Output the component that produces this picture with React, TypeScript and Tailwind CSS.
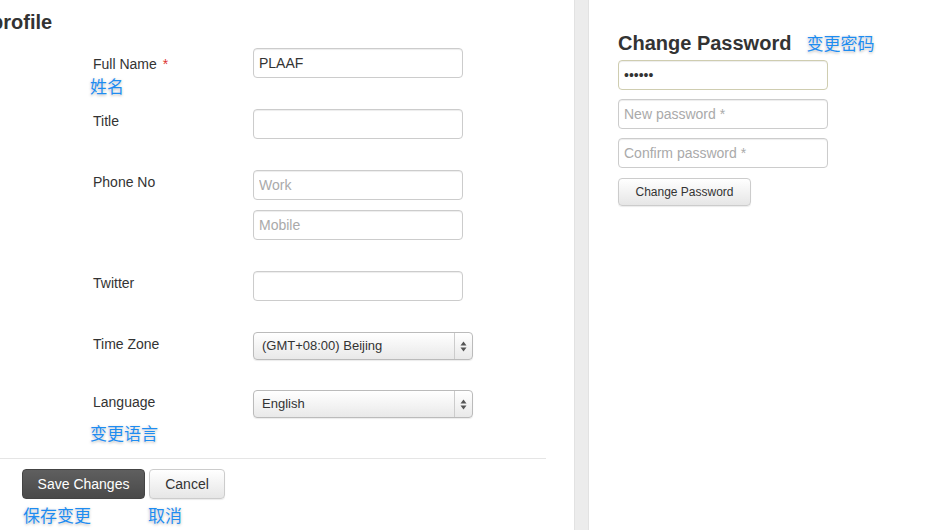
import React from "react";

const note =
  "text-[17px] leading-none whitespace-nowrap text-[#1e8cf0] [font-family:'Noto_Sans_CJK_SC',sans-serif] [text-shadow:0_0_2px_#fff,0_1px_3px_rgba(0,0,0,0.35)]";

const inputCls =
  "block w-[210px] h-[30px] px-[5px] rounded-[4px] border border-[#ccc] bg-white text-[14px] text-[#333] shadow-[inset_0_1px_1px_rgba(0,0,0,0.075)] placeholder:text-[#aaa] outline-none";

const Arrows = () => (
  <div className="flex h-full w-[18px] items-center justify-center border-l border-[#ccc]">
    <svg width="7" height="11" viewBox="0 0 7 11">
      <path d="M3.5 0.5 L6.5 4.5 L0.5 4.5 Z" fill="#555" />
      <path d="M3.5 10.5 L6.5 6.5 L0.5 6.5 Z" fill="#555" />
    </svg>
  </div>
);

const SelectBox = ({ value }: { value: string }) => (
  <div className="flex h-[28px] w-[220px] items-center rounded-[4px] border border-[#bbb] bg-gradient-to-b from-white to-[#e9e9e9] shadow-[0_1px_1px_rgba(0,0,0,0.08)]">
    <span className="flex-1 pl-[8px] text-[13px] text-[#333]">{value}</span>
    <Arrows />
  </div>
);

const Row = ({
  label,
  note: ann,
  noteTop,
  children,
  className,
  labelTop = "pt-[3px]",
}: {
  label: React.ReactNode;
  note?: string;
  noteTop?: string;
  children: React.ReactNode;
  className?: string;
  labelTop?: string;
}) => (
  <div className={`flex ${className ?? ""}`}>
    <div
      className={`relative w-[253px] shrink-0 pl-[93px] ${labelTop} text-[14px] leading-[18px] text-[#333]`}
    >
      {label}
      {ann && (
        <div className={`${note} absolute left-[90px] ${noteTop ?? ""}`}>
          {ann}
        </div>
      )}
    </div>
    <div>{children}</div>
  </div>
);

export default function App() {
  return (
    <div className="flex h-[530px] w-[952px] overflow-hidden bg-white [font-family:'Liberation_Sans',Arial,sans-serif]">
      {/* profile form */}
      <div className="w-[574px] shrink-0">
        <h1 className="ml-[-9px] pt-[10px] text-[20px] font-bold leading-[24px] text-[#333]">
          profile
        </h1>

        <div className="pt-[14px]">
          <Row
            label={
              <>
                Full Name <span className="ml-[2px] text-[#d33]">*</span>
              </>
            }
            labelTop="pt-[7px]"
            note="姓名"
            noteTop="top-[29px]"
          >
            <input className={inputCls} defaultValue="PLAAF" />
          </Row>

          <Row label="Title" className="mt-[31px]">
            <input className={inputCls} />
          </Row>

          <Row label="Phone No" className="mt-[31px]">
            <input className={inputCls} placeholder="Work" />
            <input className={`${inputCls} mt-[10px]`} placeholder="Mobile" />
          </Row>

          <Row label="Twitter" className="mt-[31px]">
            <input className={inputCls} />
          </Row>

          <Row label="Time Zone" className="mt-[31px]">
            <SelectBox value="(GMT+08:00) Beijing" />
          </Row>

          <Row
            label="Language"
            note="变更语言"
            noteTop="top-[34px]"
            className="mt-[30px]"
          >
            <SelectBox value="English" />
          </Row>
        </div>

        <div className="mt-[40px] h-px w-[546px] bg-[#e5e5e5]" />

        <div className="flex gap-[4px] pl-[22px] pt-[10px]">
          <div className="flex flex-col">
            <button className="h-[30px] w-[123px] rounded-[4px] border border-[#444] bg-gradient-to-b from-[#5f5f5f] to-[#4a4a4a] text-[14px] text-white">
              Save Changes
            </button>
            <div className={`${note} mt-[7px] ml-[1px]`}>保存变更</div>
          </div>
          <div className="flex flex-col">
            <button className="h-[30px] w-[76px] rounded-[4px] border border-[#ccc] bg-gradient-to-b from-white to-[#e6e6e6] text-[14px] text-[#333] shadow-[0_1px_1px_rgba(0,0,0,0.08)]">
              Cancel
            </button>
            <div className={`${note} mt-[7px] -ml-[1px]`}>取消</div>
          </div>
        </div>
      </div>

      {/* divider strip */}
      <div className="h-full w-[15px] shrink-0 border-x border-[#e2e2e2] bg-[#ececec]" />

      {/* change password */}
      <div className="flex-1 pl-[29px] pt-[31px]">
        <div className="flex items-baseline gap-[15px]">
          <h2 className="text-[20px] font-bold leading-[24px] text-[#333]">
            Change Password
          </h2>
          <span className={note}>变更密码</span>
        </div>
        <div className="mt-[5px] flex flex-col gap-[9px]">
          <input
            type="password"
            defaultValue="123456"
            className={`${inputCls} bg-[#faf8be] border-[#cfcdb0]`}
          />
          <input type="password" className={inputCls} placeholder="New password *" />
          <input type="password" className={inputCls} placeholder="Confirm password *" />
        </div>
        <button className="mt-[10px] h-[28px] w-[133px] rounded-[4px] border border-[#ccc] bg-gradient-to-b from-white to-[#e6e6e6] text-[12px] text-[#333] shadow-[0_1px_1px_rgba(0,0,0,0.08)]">
          Change Password
        </button>
      </div>
    </div>
  );
}
